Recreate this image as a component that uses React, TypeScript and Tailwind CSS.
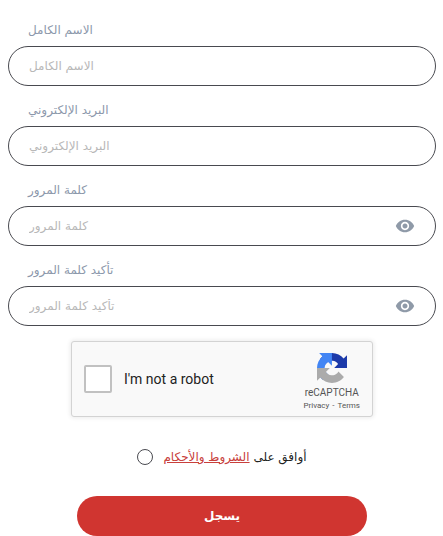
import { useState } from "react";
import { MdVisibility } from "react-icons/md";

interface FieldProps {
	id: string;
	label: string;
	type: "text" | "email" | "password";
}

const FIELDS: FieldProps[] = [
	{ id: "name", label: "الاسم الكامل", type: "text" },
	{ id: "email", label: "البريد الإلكتروني", type: "email" },
	{ id: "password", label: "كلمة المرور", type: "password" },
	{ id: "confirm", label: "تأكيد كلمة المرور", type: "password" },
];

function Field({ id, label, type }: FieldProps) {
	const [visible, setVisible] = useState(false);
	const isPassword = type === "password";

	return (
		<div className="flex flex-col gap-1.5">
			<label
				htmlFor={id}
				className="px-5 text-xs leading-5 text-[#8c98ab]"
			>
				{label}
			</label>
			<div className="flex h-10 items-center rounded-full border border-[#494a50] px-5">
				<input
					id={id}
					type={isPassword && visible ? "text" : type}
					placeholder={label}
					className="min-w-0 flex-1 bg-transparent text-xs outline-none placeholder:text-[#b8b8b8]"
				/>
				{isPassword && (
					<button
						type="button"
						aria-label="إظهار كلمة المرور"
						className="text-[#8f9aa8]"
						onClick={() => setVisible(!visible)}
					>
						<MdVisibility size={20} />
					</button>
				)}
			</div>
		</div>
	);
}

function RecaptchaLogo() {
	return (
		<svg viewBox="0 0 64 64" className="size-[30px]" aria-hidden="true">
			<path
				fill="#1c3aa9"
				d="M64 31.955l-.033-1.37V4.687l-7.16 7.16C50.948 4.674 42.033.093 32.05.093c-10.4 0-19.622 4.96-25.458 12.64l11.736 11.86a15.55 15.55 0 0 1 4.754-5.334c2.05-1.6 4.952-2.906 8.968-2.906.485 0 .86.057 1.135.163 4.976.393 9.288 3.14 11.828 7.124l-8.307 8.307L64 31.953"
			/>
			<path
				fill="#4285f4"
				d="M31.862.094l-1.37.033H4.594l7.16 7.16C4.58 13.147 0 22.06 0 32.046c0 10.4 4.96 19.622 12.64 25.458L24.5 45.768a15.55 15.55 0 0 1-5.334-4.754c-1.6-2.05-2.906-4.952-2.906-8.968 0-.485.057-.86.163-1.135.393-4.976 3.14-9.288 7.124-11.828l8.307 8.307L31.86.095"
			/>
			<path
				fill="#ababab"
				d="M.001 32.045l.033 1.37v25.898l7.16-7.16c5.86 7.173 14.774 11.754 24.76 11.754 10.4 0 19.622-4.96 25.458-12.64l-11.736-11.86a15.55 15.55 0 0 1-4.754 5.334c-2.05 1.6-4.952 2.906-8.968 2.906-.485 0-.86-.057-1.135-.163-4.976-.393-9.288-3.14-11.828-7.124l8.307-8.307c-10.522.04-22.4.066-27.295-.005"
			/>
		</svg>
	);
}

function Recaptcha() {
	return (
		<div className="flex h-19 w-full max-w-[302px] items-center justify-between rounded-[3px] border border-[#d3d3d3] bg-[#f9f9f9] px-3 font-[Roboto,sans-serif] shadow-[0_0_4px_1px_rgba(0,0,0,0.08)]">
			<label className="flex items-center gap-3 text-sm text-[#222]">
				<input
					type="checkbox"
					className="size-7 appearance-none rounded-xs border-2 border-[#c1c1c1] bg-white checked:bg-[#4285f4]"
				/>
				I'm not a robot
			</label>
			<div className="flex flex-col items-center pt-1.5 text-[#555]">
				<RecaptchaLogo />
				<span className="mt-0.5 text-[10px] leading-4">reCAPTCHA</span>
				<div className="flex gap-[3px] text-[8px] leading-[10px]">
					<a href="#privacy">Privacy</a>
					<span>-</span>
					<a href="#terms">Terms</a>
				</div>
			</div>
		</div>
	);
}

export default function App() {
	return (
		<form
			className="flex flex-col items-center bg-white pt-5 pr-[7px] pl-2 font-['DejaVu_Sans',sans-serif]"
			onSubmit={(e) => e.preventDefault()}
		>
			<div className="flex w-full flex-col gap-3.5">
				{FIELDS.map((field) => (
					<Field key={field.id} {...field} />
				))}
			</div>

			<div className="mt-[15px] flex w-full justify-center">
				<Recaptcha />
			</div>

			<div className="mt-7 flex items-center gap-2.5">
				<input
					id="agree"
					type="radio"
					className="size-4 appearance-none rounded-full border border-[#494a50] checked:bg-[#d03530]"
				/>
				<label htmlFor="agree" dir="rtl" className="text-xs leading-6 text-[#222]">
					أوافق على{" "}
					<a href="#conditions" className="text-[#c8403c] underline">
						الشروط والأحكام
					</a>
				</label>
			</div>

			<button
				type="submit"
				className="mt-[27px] h-10 w-full max-w-[290px] rounded-full bg-[#d03530] text-xs font-bold text-white"
			>
				يسجل
			</button>
		</form>
	);
}
